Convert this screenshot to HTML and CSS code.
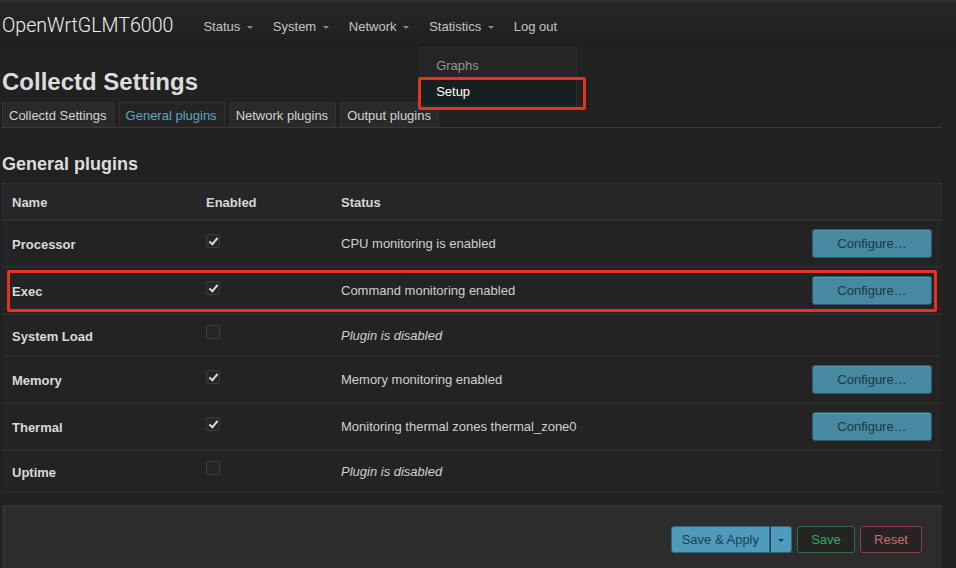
FILE: index.html
```html
<!DOCTYPE html>
<html lang="en">
<head>
    <meta charset="UTF-8">
    <meta name="viewport" content="width=device-width, initial-scale=1.0">
    <title>Collectd Settings - LuCI</title>
    <link rel="stylesheet" href="styles.css">
</head>
<body>
    <header class="navbar">
        <span class="brand">OpenWrtGLMT6000</span>
        <ul class="nav">
            <li>Status <span class="caret"></span></li>
            <li>System <span class="caret"></span></li>
            <li>Network <span class="caret"></span></li>
            <li class="open">Statistics <span class="caret"></span>
                <div class="dropdown">
                    <div class="dropdown-item muted">Graphs</div>
                    <div class="dropdown-item active">Setup</div>
                    <div class="mark mark-setup"></div>
                </div>
            </li>
            <li>Log out</li>
        </ul>
    </header>

    <div id="maincontent">
        <h2 class="page-title">Collectd Settings</h2>

        <ul class="tabs">
            <li class="tab">Collectd Settings</li>
            <li class="tab active">General plugins</li>
            <li class="tab">Network plugins</li>
            <li class="tab">Output plugins</li>
        </ul>

        <h3 class="section-title">General plugins</h3>

        <div class="table">
            <div class="tr head">
                <div class="th">Name</div>
                <div class="th">Enabled</div>
                <div class="th">Status</div>
                <div class="th"></div>
            </div>

            <div class="tr">
                <div class="td name">Processor</div>
                <div class="td"><span class="cbox checked"></span></div>
                <div class="td">CPU monitoring is enabled</div>
                <div class="td actions"><button class="btn cbi-button">Configure…</button></div>
            </div>

            <div class="tr marked">
                <div class="td name">Exec</div>
                <div class="td"><span class="cbox checked"></span></div>
                <div class="td">Command monitoring enabled</div>
                <div class="td actions"><button class="btn cbi-button">Configure…</button></div>
            </div>

            <div class="tr">
                <div class="td name">System Load</div>
                <div class="td"><span class="cbox"></span></div>
                <div class="td disabled">Plugin is disabled</div>
                <div class="td actions"></div>
            </div>

            <div class="tr">
                <div class="td name">Memory</div>
                <div class="td"><span class="cbox checked"></span></div>
                <div class="td">Memory monitoring enabled</div>
                <div class="td actions"><button class="btn cbi-button">Configure…</button></div>
            </div>

            <div class="tr">
                <div class="td name">Thermal</div>
                <div class="td"><span class="cbox checked"></span></div>
                <div class="td">Monitoring thermal zones thermal_zone0</div>
                <div class="td actions"><button class="btn cbi-button">Configure…</button></div>
            </div>

            <div class="tr">
                <div class="td name">Uptime</div>
                <div class="td"><span class="cbox"></span></div>
                <div class="td disabled">Plugin is disabled</div>
                <div class="td actions"></div>
            </div>
        </div>

        <div class="page-actions">
            <div class="btn-group">
                <button class="btn apply">Save &amp; Apply</button><button class="btn apply drop"><span class="caret dark"></span></button>
            </div>
            <button class="btn save">Save</button>
            <button class="btn reset">Reset</button>
        </div>
    </div>
</body>
</html>
```

FILE: styles.css
```css
        html, body {
            margin: 0;
            padding: 0;
        }

        body {
            background: #212121;
            color: #d0d0d0;
            font-family: "Liberation Sans", Arial, sans-serif;
            font-size: 13px;
            overflow: hidden;
        }

        /* top bar */
        .navbar {
            display: flex;
            align-items: center;
            height: 48px;
            padding: 0 2px;
            background: linear-gradient(#262626, #1f1f1f);
            border-top: 3px solid #2e2e2e;
            box-sizing: border-box;
        }

        .brand {
            font-family: Roboto, "Liberation Sans", sans-serif;
            font-weight: 300;
            font-size: 19.6px;
            color: #f0f0f0;
            margin-right: 30px;
            margin-top: -1px;
        }

        .nav {
            display: flex;
            gap: 20px;
            list-style: none;
            margin: 0;
            padding: 0;
            margin-top: 1px;
        }

        .nav li {
            position: relative;
            color: #c4c4c4;
        }

        .caret {
            display: inline-block;
            width: 0;
            height: 0;
            margin-left: 3px;
            vertical-align: middle;
            border-left: 3px solid transparent;
            border-right: 3px solid transparent;
            border-top: 3px solid #8a8a8a;
        }

        .caret.dark {
            border-top-color: #1d4050;
            margin-left: 0;
        }

        .dropdown {
            position: absolute;
            left: -9px;
            top: 28px;
            width: 157px;
            height: 61px;
            background: #252525;
            border: 1px solid #2c2c2c;
            box-sizing: border-box;
            z-index: 5;
        }

        .dropdown-item {
            padding: 0 15px;
            height: 26px;
            line-height: 26px;
        }

        .dropdown-item.muted {
            color: #959595;
            margin-top: 5px;
        }

        .dropdown-item.active {
            color: #fff;
            background: #172020;
        }

        .mark {
            position: absolute;
            border: 3px solid #e8321f;
            border-radius: 2px;
            box-sizing: border-box;
            pointer-events: none;
        }

        .mark-setup {
            left: -3px;
            top: 29px;
            width: 168px;
            height: 33px;
        }

        /* main */
        #maincontent {
            width: 940px;
            padding-left: 2px;
        }

        .page-title {
            margin: 19px 0 6px 0;
            font-size: 24px;
            line-height: 29px;
            color: #dcdcdc;
        }

        .tabs {
            display: flex;
            gap: 4px;
            list-style: none;
            margin: 0;
            padding: 0;
            border-bottom: 1px solid #3a3a3a;
        }

        .tab {
            height: 24px;
            line-height: 25px;
            padding: 0 7px 0 6px;
            background: #2a2a2a;
            border: 1px solid #303030;
            border-bottom: none;
            color: #d2d2d2;
        }

        .tab.active {
            background: #242424;
            color: #5aa8c2;
        }

        .section-title {
            margin: 25px 0 8px 0;
            font-size: 18px;
            line-height: 22px;
            color: #dcdcdc;
        }

        /* plugin table */
        .table {
            background: #232323;
        }

        .tr {
            position: relative;
            display: grid;
            grid-template-columns: 194px 135px 1fr 140px;
            align-items: center;
            padding: 0 10px;
            border-bottom: 2px solid #2b2b2b;
        }

        .tr.head {
            background: #262626;
            border-top: 1px solid #2f2f2f;
            border-bottom: 2px solid #303030;
            height: 34px;
            padding-top: 1px;
        }

        .th {
            font-weight: bold;
            color: #d6d6d6;
        }

        .td {
            min-height: 38px;
            display: flex;
            align-items: center;
            color: #d0d0d0;
        }

        .td.name {
            font-weight: bold;
            color: #dadada;
            padding-top: 2px;
        }

        .td.disabled {
            font-style: italic;
            color: #cfcfcf;
        }

        .td.actions {
            justify-content: flex-end;
        }

        .tr.marked::after {
            content: "";
            position: absolute;
            left: 5px;
            right: 5px;
            top: 2px;
            bottom: 1px;
            border: 3px solid #e8321f;
            border-radius: 2px;
        }

        .cbox {
            display: inline-block;
            width: 12px;
            height: 12px;
            margin-top: -6px;
            border: 1px solid #3c3c3c;
            border-radius: 2px;
            background: #262626;
            position: relative;
        }

        .cbox.checked::after {
            content: "";
            position: absolute;
            left: 4px;
            top: 1px;
            width: 3px;
            height: 7px;
            border-right: 2px solid #d8d8d8;
            border-bottom: 2px solid #d8d8d8;
            transform: rotate(40deg);
        }

        .btn {
            font-family: "Liberation Sans", Arial, sans-serif;
            font-size: 13px;
            border-radius: 3px;
            cursor: pointer;
        }

        .cbi-button {
            width: 120px;
            height: 29px;
            margin: 8px 0;
            background: #4889a2;
            border: 1px solid #2a5c6c;
            color: #1b3846;
            box-shadow: inset 0 1px 0 #5a9db5;
        }

        /* bottom bar */
        .page-actions {
            display: flex;
            justify-content: flex-end;
            gap: 5px;
            margin-top: 12px;
            padding: 19px 20px 30px 0;
            background: #2c2c2c;
            border-top: 2px solid #333;
            border-left: 4px solid #303030;
        }

        .btn-group {
            display: flex;
        }

        .btn.apply {
            height: 27px;
            background: #4e9bbc;
            border: 1px solid #2c6580;
            color: #1d4050;
            padding: 0 10px;
            border-radius: 3px 0 0 3px;
        }

        .btn.apply.drop {
            padding: 0 7px;
            border-left: 1px solid #1d4050;
            border-radius: 0 3px 3px 0;
        }

        .btn.save {
            height: 27px;
            width: 58px;
            background: #232523;
            border: 1px solid #2f7048;
            color: #3aa866;
        }

        .btn.reset {
            height: 27px;
            width: 62px;
            background: #262323;
            border: 1px solid #8e3f48;
            color: #d26870;
        }
```
